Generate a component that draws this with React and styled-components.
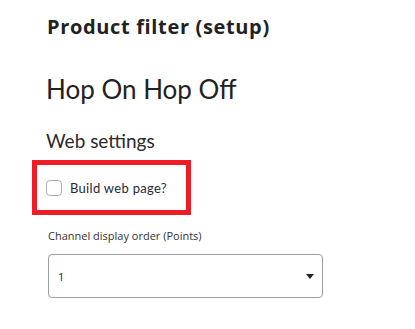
import styled, { createGlobalStyle } from "styled-components";

const GlobalStyle = createGlobalStyle`
  body {
    margin: 0;
    background: #ffffff;
    font-family: Lato, "Open Sans", sans-serif;
    color: #222222;
  }
`;

const Page = styled.div`
  display: flex;
  flex-direction: column;
  align-items: flex-start;
  padding: 14px 0 0 47px;
`;

const PageTitle = styled.h1`
  margin: 0;
  font-family: "Open Sans", sans-serif;
  font-size: 20px;
  font-weight: 700;
  line-height: 25px;
  letter-spacing: 0.65px;
  color: #222;
`;

const ProductName = styled.h2`
  margin: 35px 0 0 -1px;
  font-size: 26px;
  font-weight: 400;
  line-height: 1.2;
  color: #222;
`;

const SectionTitle = styled.h3`
  margin: 25px 0 0 -1px;
  font-size: 19px;
  font-weight: 400;
  line-height: 21px;
  color: #2a2a2a;
`;

const Highlight = styled.div`
  margin: 9px 0 0 -15px;
  width: 140px;
  height: 45px;
  border: 5px solid #ee1c25;
  display: flex;
  align-items: center;
  padding: 0 0 0 9px;
`;

const CheckRow = styled.label`
  display: flex;
  align-items: center;
  gap: 8px;
  font-size: 13px;
  letter-spacing: 0.3px;
  color: #1f2a37;
  cursor: pointer;
`;

const Box = styled.span`
  width: 16px;
  height: 16px;
  box-sizing: border-box;
  border: 1px solid #a9aeb6;
  border-radius: 4px;
  background: #fff;
`;

const FieldLabel = styled.div`
  margin: 13px 0 0 1px;
  font-family: "Open Sans", sans-serif;
  font-size: 11px;
  line-height: 15px;
  color: #333;
`;

const Select = styled.div`
  margin: 11px 0 0 1px;
  width: 275px;
  height: 44px;
  box-sizing: border-box;
  border: 1px solid #9aa0a6;
  border-radius: 4px;
  display: flex;
  align-items: center;
  justify-content: space-between;
  padding: 0 8px 0 9px;
  font-family: "Open Sans", sans-serif;
  font-size: 11px;
  color: #222;
`;

const Caret = styled.span`
  width: 0;
  height: 0;
  border-left: 4px solid transparent;
  border-right: 4px solid transparent;
  border-top: 5px solid #222;
`;

export default function App() {
  return (
    <Page>
      <GlobalStyle />
      <PageTitle>Product filter (setup)</PageTitle>
      <ProductName>Hop On Hop Off</ProductName>
      <SectionTitle>Web settings</SectionTitle>
      <Highlight>
        <CheckRow>
          <Box />
          Build web page?
        </CheckRow>
      </Highlight>
      <FieldLabel>Channel display order (Points)</FieldLabel>
      <Select>
        <span>1</span>
        <Caret />
      </Select>
    </Page>
  );
}
